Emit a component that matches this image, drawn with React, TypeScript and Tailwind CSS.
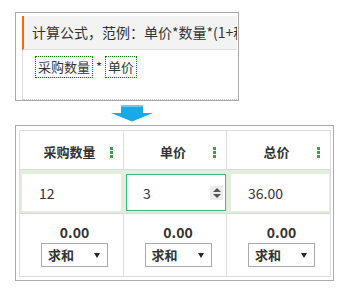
import React from 'react';

const cols = [
  { title: '采购数量', value: '12' },
  { title: '单价', value: '3', active: true },
  { title: '总价', value: '36.00' },
];

const Kebab = () => (
  <div className="flex flex-col gap-[1px] mr-[10px]">
    <span className="block w-[3px] h-[3px] bg-[#3f9f47]" />
    <span className="block w-[3px] h-[3px] bg-[#3f9f47]" />
    <span className="block w-[3px] h-[3px] bg-[#3f9f47]" />
  </div>
);

const Spinner = () => (
  <div className="w-[13px] h-[14px] mr-[2px] bg-[#ececec] flex flex-col items-center justify-center gap-[2px]">
    <svg width="8" height="4" viewBox="0 0 8 4">
      <polygon points="0,4 8,4 4,0" fill="#555" />
    </svg>
    <svg width="8" height="4" viewBox="0 0 8 4">
      <polygon points="0,0 8,0 4,4" fill="#555" />
    </svg>
  </div>
);

const App = () => {
  return (
    <div className="w-[346px] h-[290px] bg-white overflow-hidden font-['Noto_Sans_CJK_SC',sans-serif] text-[#333]">
      {/* formula editor */}
      <div className="mt-[12px] ml-[15px] w-[224px] h-[89px] border border-[#aaa] pt-[3px] pl-[6px] pr-[1px] flex flex-col">
        <div className="h-[34px] shrink-0 bg-[#f3f3f3] border-l-2 border-l-[#f60] border-b border-b-[#e2e2e2] pl-[8px] text-[14px] leading-[33px] whitespace-nowrap overflow-hidden">
          计算公式，范例：单价*数量*(1+税率)
        </div>
        <div className="flex-1 border-l border-l-[#ddd] flex flex-col">
          <div className="pl-[12px] pt-[6px] flex items-start gap-[3px] text-[13px]">
            <span className="h-[22px] px-[2px] leading-[20px] border border-dotted border-[#008000]">采购数量</span>
            <span className="leading-[22px]">*</span>
            <span className="h-[22px] px-[2px] leading-[20px] border border-dotted border-[#008000]">单价</span>
          </div>
          <div className="mt-auto border-b border-dotted border-[#ccc]" />
        </div>
      </div>

      <svg className="block mt-[4px] ml-[110px]" width="44" height="17" viewBox="0 0 44 17">
        <rect x="11" y="0" width="22" height="8" fill="#18a9ec" />
        <rect x="11" y="0" width="22" height="2" fill="#6cc9f4" />
        <polygon points="1,8 43,8 22,16.5" fill="#18a9ec" />
      </svg>

      {/* table */}
      <div className="mt-[3px] ml-[15px] w-[319px] h-[156px] border border-[#aaa] pt-[4px] pl-[3px] pr-[2px] pb-[3px]">
        <div className="h-full border border-[#ddd] flex flex-col">
          <div className="h-[39px] grid grid-cols-[103px_103px_104px] border-b border-[#ddd]">
            {cols.map((c, i) => (
              <div key={c.title} className={`flex items-center pt-[4px] pl-[9px] ${i > 0 ? 'border-l border-[#ddd]' : ''}`}>
                <span className="flex-1 text-center text-[13px] font-bold leading-[16px]">{c.title}</span>
                <Kebab />
              </div>
            ))}
          </div>

          <div className="h-[44px] bg-[#e2eedb] border-b border-[#d8d8d8] flex gap-[5px] pl-[2px] pt-[4px]">
            {cols.map((c, i) => (
              <div
                key={c.title}
                className={`h-[37px] bg-white border flex items-center pl-[16px] text-[14px] leading-[16px] ${
                  c.active ? 'border-[#2ec27e]' : 'border-white'
                } ${i === 0 ? 'w-[99px]' : i === 1 ? 'w-[100px]' : 'w-[98px]'}`}
              >
                <span className="flex-1">{c.value}</span>
                {c.active && <Spinner />}
              </div>
            ))}
          </div>

          <div className="flex-1 grid grid-cols-[103px_103px_104px]">
            {cols.map((c, i) => (
              <div key={c.title} className={`flex flex-col items-center pt-[10px] pl-[6px] ${i > 0 ? 'border-l border-[#ddd]' : ''}`}>
                <span className="text-[14px] font-bold leading-[16px]">0.00</span>
                <div className="mt-[3px] w-[67px] h-[24px] border border-[#aaa] bg-white flex items-center justify-between pl-[6px] pr-[7px]">
                  <span className="text-[13px] font-bold leading-[16px]">求和</span>
                  <svg width="6" height="5" viewBox="0 0 6 5">
                    <polygon points="0,0 6,0 3,5" fill="#222" />
                  </svg>
                </div>
              </div>
            ))}
          </div>
        </div>
      </div>
    </div>
  );
};

export default App;
